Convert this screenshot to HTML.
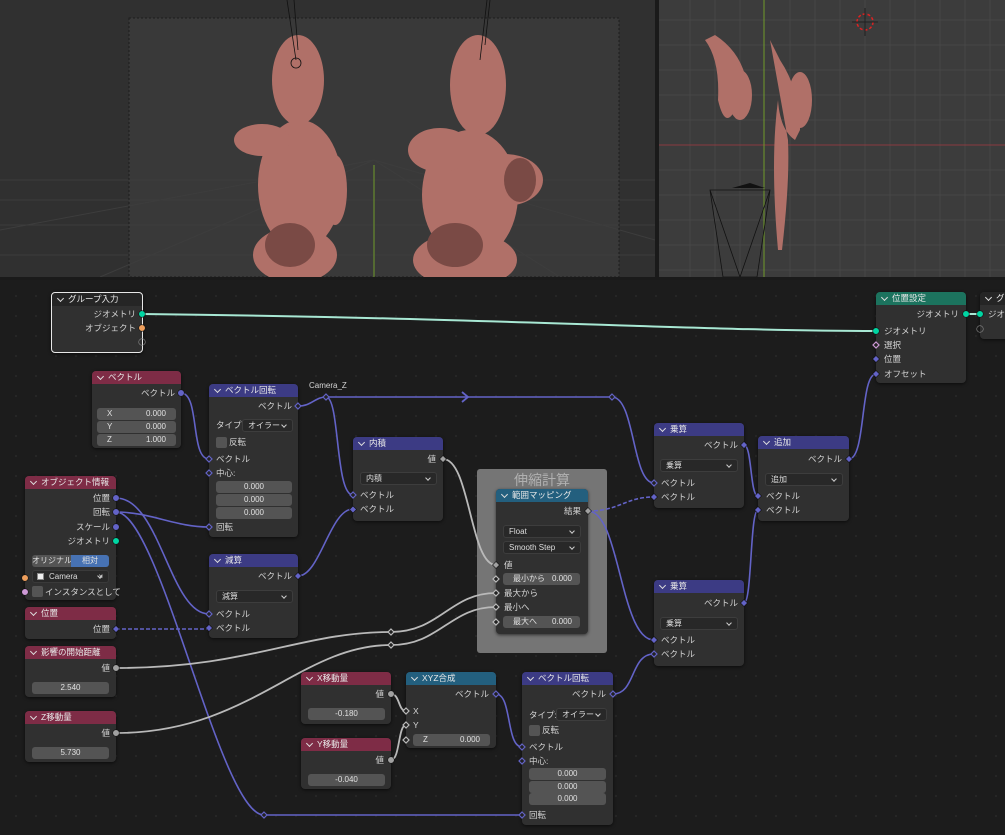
<!DOCTYPE html>
<html><head><meta charset="utf-8"><style>
*{margin:0;padding:0;box-sizing:border-box}
body{width:1005px;height:835px;overflow:hidden;background:#1d1d1d;position:relative;font-family:"Liberation Sans","Noto Sans CJK JP",sans-serif;}
.ne{position:absolute;left:0;top:280px;width:1005px;height:555px;background-color:#1c1c1c;background-image:radial-gradient(circle,#262626 1px,transparent 1.3px);background-size:20px 20px;background-position:6px 6px}
.n{position:absolute;background:#303030;border-radius:4px;box-shadow:0 1px 3px rgba(0,0,0,.6)}
.h{position:absolute;left:0;top:0;right:0;height:13px;border-radius:4px 4px 0 0;font-size:8.5px;color:#e8e8e8;line-height:13px;padding-left:16px;white-space:nowrap;overflow:hidden}
.h:before{content:"";position:absolute;left:6px;top:3px;width:4px;height:4px;border-right:1px solid #ddd;border-bottom:1px solid #ddd;transform:rotate(45deg)}
.red{background:#7e2c46}.pur{background:#3c3b84}.grn{background:#1c735e}.tea{background:#235f7e}.drk{background:#252525}
.t{position:absolute;font-size:8.5px;color:#d4d4d4;line-height:11px;white-space:nowrap}
.r{text-align:right}
.f{position:absolute;background:#545454;border-radius:3px;font-size:8px;color:#e0e0e0;line-height:12px;height:12px;white-space:nowrap}
.d{position:absolute;background:#282828;border:1px solid #3d3d3d;border-radius:3px;font-size:8px;color:#ddd;line-height:11px;height:13px;padding-left:5px;white-space:nowrap}
.d:after{content:"";position:absolute;right:6px;top:3px;width:3px;height:3px;border-right:1px solid #ccc;border-bottom:1px solid #ccc;transform:rotate(45deg)}
.cb{position:absolute;width:11px;height:11px;background:#545454;border-radius:2px}
svg{position:absolute;left:0;top:0}
</style></head><body>
<svg width="1005" height="282" style="z-index:0">
<rect x="0" y="0" width="1005" height="282" fill="#1d1d1d"/>
<rect x="0" y="0" width="655" height="277" fill="#303030"/>
<g stroke="#3d3d3d" stroke-width="1">
<line x1="0" y1="180" x2="655" y2="180"/><line x1="0" y1="200" x2="655" y2="200"/><line x1="0" y1="225" x2="655" y2="225"/><line x1="0" y1="255" x2="655" y2="255"/>
<line x1="374" y1="160" x2="0" y2="230"/><line x1="374" y1="160" x2="100" y2="277"/><line x1="374" y1="160" x2="655" y2="240"/><line x1="374" y1="160" x2="560" y2="277"/>
</g>
<rect x="129" y="18" width="490" height="259" fill="#3d3d3d" opacity="0.7" stroke="#151515" stroke-dasharray="2,2"/>
<line x1="374" y1="165" x2="374" y2="277" stroke="#6f9a2a" stroke-width="1"/>
<g fill="#b07068">
<ellipse cx="298" cy="80" rx="26" ry="45"/><ellipse cx="478" cy="85" rx="28" ry="50"/>
<ellipse cx="300" cy="185" rx="42" ry="65"/><ellipse cx="470" cy="195" rx="48" ry="65"/>
<ellipse cx="295" cy="255" rx="42" ry="28"/><ellipse cx="465" cy="260" rx="52" ry="28"/>
<ellipse cx="262" cy="140" rx="28" ry="16"/><ellipse cx="505" cy="180" rx="38" ry="26"/>
<ellipse cx="440" cy="150" rx="32" ry="22"/><ellipse cx="335" cy="190" rx="12" ry="35"/>
</g>
<g fill="#7a4a45"><ellipse cx="290" cy="245" rx="25" ry="22"/><ellipse cx="455" cy="245" rx="28" ry="22"/><ellipse cx="520" cy="180" rx="16" ry="22"/></g>
<g stroke="#111" fill="none" stroke-width="0.8"><path d="M287 0 L296 60 M294 0 L298 50"/><path d="M487 0 L480 60 M490 0 L485 45"/><circle cx="296" cy="63" r="5"/></g>
<rect x="659" y="0" width="346" height="277" fill="#3c3c3c"/>
<g stroke="#464646" stroke-width="1">
<path d="M659 20H1005M659 45H1005M659 70H1005M659 95H1005M659 120H1005M659 170H1005M659 195H1005M659 220H1005M659 245H1005M659 270H1005"/>
<path d="M690 0V277M715 0V277M740 0V277M790 0V277M815 0V277M840 0V277M865 0V277M890 0V277M915 0V277M940 0V277M965 0V277M990 0V277"/>
</g>
<line x1="659" y1="145" x2="1005" y2="145" stroke="#8a3a40"/>
<line x1="764" y1="0" x2="764" y2="277" stroke="#6f9a2a"/>
<g fill="#b07068"><path d="M705 40 Q720 60 718 100 Q725 130 735 110 L745 75 Q738 50 715 35Z"/><path d="M770 40 L780 60 Q800 90 800 130 L795 140 Q780 130 778 100 Q770 160 778 250 L782 250 Q790 180 788 140Z"/><ellipse cx="740" cy="95" rx="12" ry="25"/><ellipse cx="800" cy="100" rx="12" ry="28"/></g>
<path d="M710 190 L770 190 L757 277 L723 277Z M710 190 L740 277 M770 190 L740 277" stroke="#111" fill="none" stroke-width="0.8"/>
<path d="M732 188 L765 188 L750 183Z" fill="#111"/>
<circle cx="865" cy="22" r="8" fill="none" stroke="#d22" stroke-width="1.5" stroke-dasharray="3,2"/>
<path d="M852 22H878M865 8V36" stroke="#222"/>
<rect x="0" y="277" width="1005" height="5" fill="#1a1a1a"/>
<rect x="655" y="0" width="4" height="277" fill="#1a1a1a"/>
</svg>
<div class="ne"></div>

<div style="position:absolute;left:477px;top:469px;width:130px;height:184px;background:#757575;border-radius:3px"></div>
<div style="position:absolute;left:477px;top:470px;width:130px;text-align:center;font-size:14px;color:#b0b0b0;font-family:'Noto Sans CJK JP',sans-serif">伸縮計算</div>

<svg width="1005" height="835" style="z-index:1" fill="none">
<g stroke="#a8e8d4" stroke-width="2"><path d="M142 314 C500 318 700 331 876 331"/><path d="M966 314 H980"/></g>
<g stroke="#6363c7" stroke-width="1.6">
<path d="M181 393 C200 393 190 459 209 459"/>
<path d="M298 406 C312 406 315 397 326 397 H612 C635 397 632 483 654 483"/>
<path d="M326 397 C340 397 335 495 353 495"/>
<path d="M298 576 C320 576 330 509 353 509"/>
<path d="M744 445 C752 445 750 496 758 496"/>
<path d="M744 603 C752 603 750 510 758 510"/>
<path d="M849 459 C866 459 860 374 876 374"/>
<path d="M116 498 C160 498 170 614 209 614"/>
<path d="M116 512 C150 512 175 527 209 527"/>
<path d="M116 512 C160 512 220 815 264 815 H522"/>
<path d="M116 629 H209" stroke-dasharray="4,2"/>
<path d="M496 694 C512 694 506 747 522 747"/>
<path d="M613 694 C636 694 630 654 654 654"/>
<path d="M588 511 C620 511 620 640 654 640"/>
<path d="M588 511 C620 511 625 497 654 497" stroke-dasharray="4,2"/>
<path d="M462 392 L468 397 L462 402" stroke-width="1.8"/>
</g>
<g stroke="#b9b9b9" stroke-width="1.8">
<path d="M443 459 C470 459 470 565 496 565"/>
<path d="M116 668 C250 668 300 632 391 632 C440 632 450 593 496 593"/>
<path d="M116 733 C250 733 300 645 391 645 C440 645 450 607 496 607"/>
<path d="M391 694 C400 694 398 711 406 711"/>
<path d="M391 760 C400 760 398 725 406 725"/>
</g>
</svg>

<div class="n" style="left:51px;top:292px;width:92px;height:61px;border:1px solid #e8e8e8;z-index:2"><div class="h drk">グループ入力</div></div>
<div class="n" style="left:92px;top:371px;width:89px;height:77px;z-index:2"><div class="h red">ベクトル</div></div>
<div class="n" style="left:209px;top:384px;width:89px;height:153px;z-index:2"><div class="h pur">ベクトル回転</div></div>
<div class="n" style="left:353px;top:437px;width:90px;height:84px;z-index:2"><div class="h pur">内積</div></div>
<div class="n" style="left:496px;top:489px;width:92px;height:145px;z-index:2"><div class="h tea">範囲マッピング</div></div>
<div class="n" style="left:654px;top:423px;width:90px;height:85px;z-index:2"><div class="h pur">乗算</div></div>
<div class="n" style="left:758px;top:436px;width:91px;height:85px;z-index:2"><div class="h pur">追加</div></div>
<div class="n" style="left:876px;top:292px;width:90px;height:91px;z-index:2"><div class="h grn">位置設定</div></div>
<div class="n" style="left:980px;top:292px;width:30px;height:47px;z-index:2"><div class="h drk">グループ出力</div></div>
<div class="n" style="left:654px;top:580px;width:90px;height:86px;z-index:2"><div class="h pur">乗算</div></div>
<div class="n" style="left:25px;top:476px;width:91px;height:124px;z-index:2"><div class="h red">オブジェクト情報</div></div>
<div class="n" style="left:209px;top:554px;width:89px;height:84px;z-index:2"><div class="h pur">減算</div></div>
<div class="n" style="left:25px;top:607px;width:91px;height:32px;z-index:2"><div class="h red">位置</div></div>
<div class="n" style="left:25px;top:646px;width:91px;height:51px;z-index:2"><div class="h red">影響の開始距離</div></div>
<div class="n" style="left:25px;top:711px;width:91px;height:51px;z-index:2"><div class="h red">Z移動量</div></div>
<div class="n" style="left:301px;top:672px;width:90px;height:52px;z-index:2"><div class="h red">X移動量</div></div>
<div class="n" style="left:301px;top:738px;width:90px;height:51px;z-index:2"><div class="h red">Y移動量</div></div>
<div class="n" style="left:406px;top:672px;width:90px;height:76px;z-index:2"><div class="h tea">XYZ合成</div></div>
<div class="n" style="left:522px;top:672px;width:91px;height:153px;z-index:2"><div class="h pur">ベクトル回転</div></div>

<div style="position:absolute;left:0;top:0;width:1005px;height:835px;z-index:3">
<div class="t r" style="right:869px;top:309px">ジオメトリ</div>
<div class="t r" style="right:869px;top:323px">オブジェクト</div>
<div class="t r" style="right:830px;top:388px">ベクトル</div>
<div class="f" style="left:97px;top:408px;width:79px"><span style="position:absolute;left:10px">X</span><span style="position:absolute;right:10px">0.000</span></div>
<div class="f" style="left:97px;top:421px;width:79px"><span style="position:absolute;left:10px">Y</span><span style="position:absolute;right:10px">0.000</span></div>
<div class="f" style="left:97px;top:434px;width:79px"><span style="position:absolute;left:10px">Z</span><span style="position:absolute;right:10px">1.000</span></div>
<div class="t" style="left:309px;top:380px;font-size:8px">Camera_Z</div>
<div class="t r" style="right:713px;top:401px">ベクトル</div>
<div class="t" style="left:216px;top:420px">タイプ:</div>
<div class="d" style="left:242px;top:419px;width:51px">オイラー</div>
<div class="cb" style="left:216px;top:437px"></div><div class="t" style="left:229px;top:437px">反転</div>
<div class="t" style="left:216px;top:454px">ベクトル</div>
<div class="t" style="left:216px;top:468px">中心:</div>
<div class="f" style="left:216px;top:481px;width:76px;text-align:center">0.000</div>
<div class="f" style="left:216px;top:494px;width:76px;text-align:center">0.000</div>
<div class="f" style="left:216px;top:507px;width:76px;text-align:center">0.000</div>
<div class="t" style="left:216px;top:522px">回転</div>
<div class="t r" style="right:569px;top:454px">値</div>
<div class="d" style="left:360px;top:472px;width:77px">内積</div>
<div class="t" style="left:360px;top:490px">ベクトル</div>
<div class="t" style="left:360px;top:504px">ベクトル</div>
<div class="t r" style="right:424px;top:506px">結果</div>
<div class="d" style="left:503px;top:525px;width:78px">Float</div>
<div class="d" style="left:503px;top:541px;width:78px">Smooth Step</div>
<div class="t" style="left:504px;top:560px">値</div>
<div class="f" style="left:503px;top:573px;width:77px"><span style="position:absolute;left:10px">最小から</span><span style="position:absolute;right:8px">0.000</span></div>
<div class="t" style="left:504px;top:588px">最大から</div>
<div class="t" style="left:504px;top:602px">最小へ</div>
<div class="f" style="left:503px;top:616px;width:77px"><span style="position:absolute;left:10px">最大へ</span><span style="position:absolute;right:8px">0.000</span></div>
<div class="t r" style="right:267px;top:440px">ベクトル</div>
<div class="d" style="left:660px;top:459px;width:78px">乗算</div>
<div class="t" style="left:661px;top:478px">ベクトル</div>
<div class="t" style="left:661px;top:492px">ベクトル</div>
<div class="t r" style="right:163px;top:454px">ベクトル</div>
<div class="d" style="left:765px;top:473px;width:78px">追加</div>
<div class="t" style="left:766px;top:491px">ベクトル</div>
<div class="t" style="left:766px;top:505px">ベクトル</div>
<div class="t r" style="right:46px;top:309px">ジオメトリ</div>
<div class="t" style="left:884px;top:326px">ジオメトリ</div>
<div class="t" style="left:884px;top:340px">選択</div>
<div class="t" style="left:884px;top:354px">位置</div>
<div class="t" style="left:884px;top:369px">オフセット</div>
<div class="t" style="left:988px;top:309px">ジオメ</div>
<div class="t r" style="right:267px;top:598px">ベクトル</div>
<div class="d" style="left:660px;top:617px;width:78px">乗算</div>
<div class="t" style="left:661px;top:635px">ベクトル</div>
<div class="t" style="left:661px;top:649px">ベクトル</div>
<div class="t r" style="right:895px;top:493px">位置</div>
<div class="t r" style="right:895px;top:507px">回転</div>
<div class="t r" style="right:895px;top:522px">スケール</div>
<div class="t r" style="right:895px;top:536px">ジオメトリ</div>
<div class="f" style="left:32px;top:555px;width:39px;background:#545454;border-radius:3px 0 0 3px;text-align:center">オリジナル</div>
<div class="f" style="left:71px;top:555px;width:38px;background:#4772b3;border-radius:0 3px 3px 0;text-align:center">相対</div>
<div class="d" style="left:32px;top:570px;width:77px;padding-left:16px;border-color:#3a3a3a">Camera<span style="position:absolute;right:5px">×</span><span style="position:absolute;left:4px;top:2px;width:7px;height:7px;background:#eee;border:1px solid #888"></span></div>
<div class="cb" style="left:32px;top:586px"></div><div class="t" style="left:45px;top:587px">インスタンスとして</div>
<div class="t r" style="right:713px;top:571px">ベクトル</div>
<div class="d" style="left:216px;top:590px;width:77px">減算</div>
<div class="t" style="left:216px;top:609px">ベクトル</div>
<div class="t" style="left:216px;top:623px">ベクトル</div>
<div class="t r" style="right:895px;top:624px">位置</div>
<div class="t r" style="right:895px;top:663px">値</div>
<div class="f" style="left:32px;top:682px;width:77px;text-align:center">2.540</div>
<div class="t r" style="right:895px;top:728px">値</div>
<div class="f" style="left:32px;top:747px;width:77px;text-align:center">5.730</div>
<div class="t r" style="right:621px;top:689px">値</div>
<div class="f" style="left:308px;top:708px;width:77px;text-align:center">-0.180</div>
<div class="t r" style="right:621px;top:755px">値</div>
<div class="f" style="left:308px;top:774px;width:77px;text-align:center">-0.040</div>
<div class="t r" style="right:516px;top:689px">ベクトル</div>
<div class="t" style="left:413px;top:706px">X</div>
<div class="t" style="left:413px;top:720px">Y</div>
<div class="f" style="left:413px;top:734px;width:77px"><span style="position:absolute;left:10px">Z</span><span style="position:absolute;right:10px">0.000</span></div>
<div class="t r" style="right:399px;top:689px">ベクトル</div>
<div class="t" style="left:529px;top:710px">タイプ:</div>
<div class="d" style="left:556px;top:708px;width:51px">オイラー</div>
<div class="cb" style="left:529px;top:725px"></div><div class="t" style="left:542px;top:725px">反転</div>
<div class="t" style="left:529px;top:742px">ベクトル</div>
<div class="t" style="left:529px;top:756px">中心:</div>
<div class="f" style="left:529px;top:768px;width:77px;text-align:center">0.000</div>
<div class="f" style="left:529px;top:781px;width:77px;text-align:center">0.000</div>
<div class="f" style="left:529px;top:793px;width:77px;text-align:center">0.000</div>
<div class="t" style="left:529px;top:810px">回転</div>
</div>

<svg width="1005" height="835" style="z-index:4">
<g stroke="#111" stroke-width="0.6">
<circle cx="142" cy="314" r="3.3" fill="#00d6a3"/><circle cx="142" cy="328" r="3.3" fill="#ed9e5c"/><circle cx="142" cy="342" r="3.3" fill="none" stroke="#888"/>
<circle cx="181" cy="393" r="3.3" fill="#6363c7"/>
<circle cx="966" cy="314" r="3.3" fill="#00d6a3"/><circle cx="876" cy="331" r="3.3" fill="#00d6a3"/><circle cx="980" cy="314" r="3.3" fill="#00d6a3"/><circle cx="980" cy="329" r="3.3" fill="none" stroke="#888"/>
<circle cx="116" cy="498" r="3.3" fill="#6363c7"/><circle cx="116" cy="512" r="3.3" fill="#6363c7"/><circle cx="116" cy="527" r="3.3" fill="#6363c7"/><circle cx="116" cy="541" r="3.3" fill="#00d6a3"/>
<circle cx="25" cy="578" r="3.3" fill="#ed9e5c"/><circle cx="25" cy="592" r="3.3" fill="#ce99d6"/>
<circle cx="116" cy="668" r="3.3" fill="#a1a1a1"/><circle cx="116" cy="733" r="3.3" fill="#a1a1a1"/>
<circle cx="391" cy="694" r="3.3" fill="#a1a1a1"/><circle cx="391" cy="760" r="3.3" fill="#a1a1a1"/>
</g>
<g stroke="#111" stroke-width="0.6" fill="#6363c7">
<path d="M353 506l3.5 3.5-3.5 3.5-3.5-3.5z"/><path d="M298 572.5l3.5 3.5-3.5 3.5-3.5-3.5z"/><path d="M744 441.5l3.5 3.5-3.5 3.5-3.5-3.5z"/><path d="M654 493.5l3.5 3.5-3.5 3.5-3.5-3.5z"/>
<path d="M758 492.5l3.5 3.5-3.5 3.5-3.5-3.5z"/><path d="M758 506.5l3.5 3.5-3.5 3.5-3.5-3.5z"/><path d="M849 455.5l3.5 3.5-3.5 3.5-3.5-3.5z"/><path d="M744 599.5l3.5 3.5-3.5 3.5-3.5-3.5z"/><path d="M654 636.5l3.5 3.5-3.5 3.5-3.5-3.5z"/>
<path d="M876 355.5l3.5 3.5-3.5 3.5-3.5-3.5z"/><path d="M876 370.5l3.5 3.5-3.5 3.5-3.5-3.5z"/><path d="M116 625.5l3.5 3.5-3.5 3.5-3.5-3.5z"/><path d="M209 624.5l3.5 3.5-3.5 3.5-3.5-3.5z"/>
<path d="M443 455.5l3.5 3.5-3.5 3.5-3.5-3.5z" fill="#a1a1a1"/><path d="M588 507.5l3.5 3.5-3.5 3.5-3.5-3.5z" fill="#a1a1a1"/><path d="M496 561.5l3.5 3.5-3.5 3.5-3.5-3.5z" fill="#a1a1a1"/>
</g>
<g stroke-width="1.2" fill="#222">
<path d="M209 456l3 3-3 3-3-3z" stroke="#6363c7"/><path d="M209 470l3 3-3 3-3-3z" stroke="#6363c7"/><path d="M209 524l3 3-3 3-3-3z" stroke="#6363c7"/>
<path d="M298 403l3 3-3 3-3-3z" stroke="#6363c7"/><path d="M326 394l3 3-3 3-3-3z" stroke="#6363c7"/><path d="M612 394l3 3-3 3-3-3z" stroke="#6363c7"/>
<path d="M353 492l3 3-3 3-3-3z" stroke="#6363c7"/><path d="M654 480l3 3-3 3-3-3z" stroke="#6363c7"/><path d="M654 651l3 3-3 3-3-3z" stroke="#6363c7"/>
<path d="M209 611l3 3-3 3-3-3z" stroke="#6363c7"/><path d="M876 342l3 3-3 3-3-3z" stroke="#ce99d6"/>
<path d="M264 812l3 3-3 3-3-3z" stroke="#6363c7"/><path d="M522 812l3 3-3 3-3-3z" stroke="#6363c7"/><path d="M522 744l3 3-3 3-3-3z" stroke="#6363c7"/><path d="M522 758l3 3-3 3-3-3z" stroke="#6363c7"/>
<path d="M496 691l3 3-3 3-3-3z" stroke="#6363c7"/><path d="M613 691l3 3-3 3-3-3z" stroke="#6363c7"/>
<path d="M496 576l3 3-3 3-3-3z" stroke="#bbb"/><path d="M496 590l3 3-3 3-3-3z" stroke="#bbb"/><path d="M496 604l3 3-3 3-3-3z" stroke="#bbb"/><path d="M496 619l3 3-3 3-3-3z" stroke="#bbb"/>
<path d="M391 629l3 3-3 3-3-3z" stroke="#bbb"/><path d="M391 642l3 3-3 3-3-3z" stroke="#bbb"/>
<path d="M406 708l3 3-3 3-3-3z" stroke="#bbb"/><path d="M406 722l3 3-3 3-3-3z" stroke="#bbb"/><path d="M406 737l3 3-3 3-3-3z" stroke="#bbb"/>
</g>
</svg>
</body></html>
